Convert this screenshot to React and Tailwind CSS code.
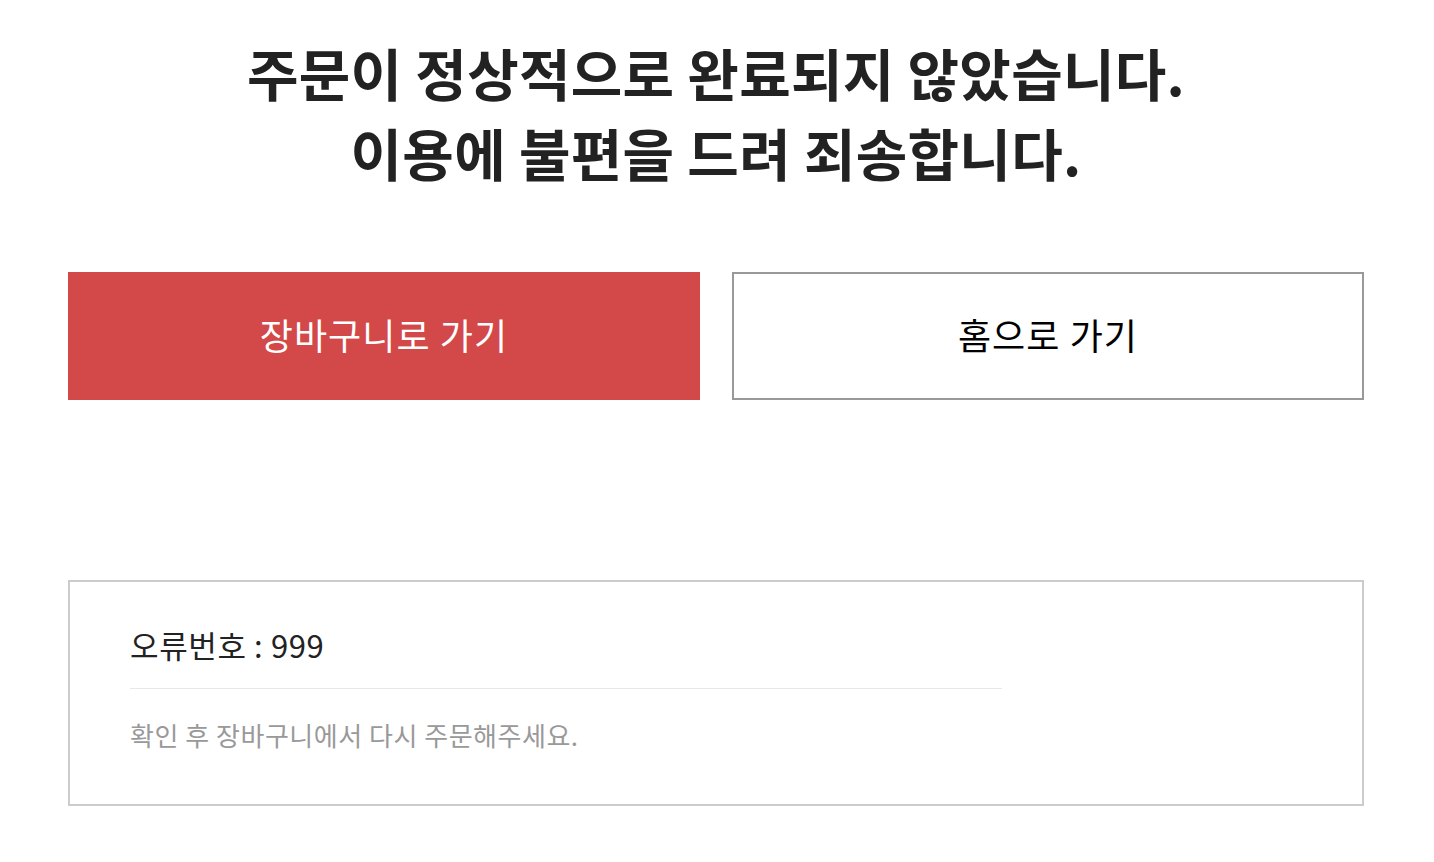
import React from 'react';

const font = { fontFamily: '"Noto Sans CJK KR", "Noto Sans", sans-serif' };

const App = () => {
  return (
    <div className="bg-white min-h-screen pl-[68px] pr-[70px] pt-[32px]" style={font}>
      {/* Title */}
      <h1 className="text-center text-[56px] leading-[80px] font-bold text-[#222] tracking-[0.005em]">
        주문이 정상적으로 완료되지 않았습니다.
        <br />
        이용에 불편을 드려 죄송합니다.
      </h1>

      {/* Buttons */}
      <div className="mt-[80px] grid grid-cols-2 gap-[32px]">
        <button className="h-[128px] pb-[4px] bg-[#d34848] text-white text-[36px] tracking-[0.03em]">
          장바구니로 가기
        </button>
        <button className="h-[128px] pb-[4px] bg-white border-2 border-[#999] text-black text-[36px] tracking-[0.03em]">
          홈으로 가기
        </button>
      </div>

      {/* Error info */}
      <div className="mt-[180px] border-2 border-[#ccc] pl-[60px] pt-[40px] pb-[49px]">
        <div className="w-[872px]">
          <p className="text-[31px] leading-[46px] text-[#222] tracking-[0.02em] pb-[20px] border-b border-[#e8e8e8]">
            오류번호 : 999
          </p>
          <p className="pt-[26px] text-[26px] leading-[40px] text-[#999] tracking-[0.02em]">
            확인 후 장바구니에서 다시 주문해주세요.
          </p>
        </div>
      </div>
    </div>
  );
};

export default App;
